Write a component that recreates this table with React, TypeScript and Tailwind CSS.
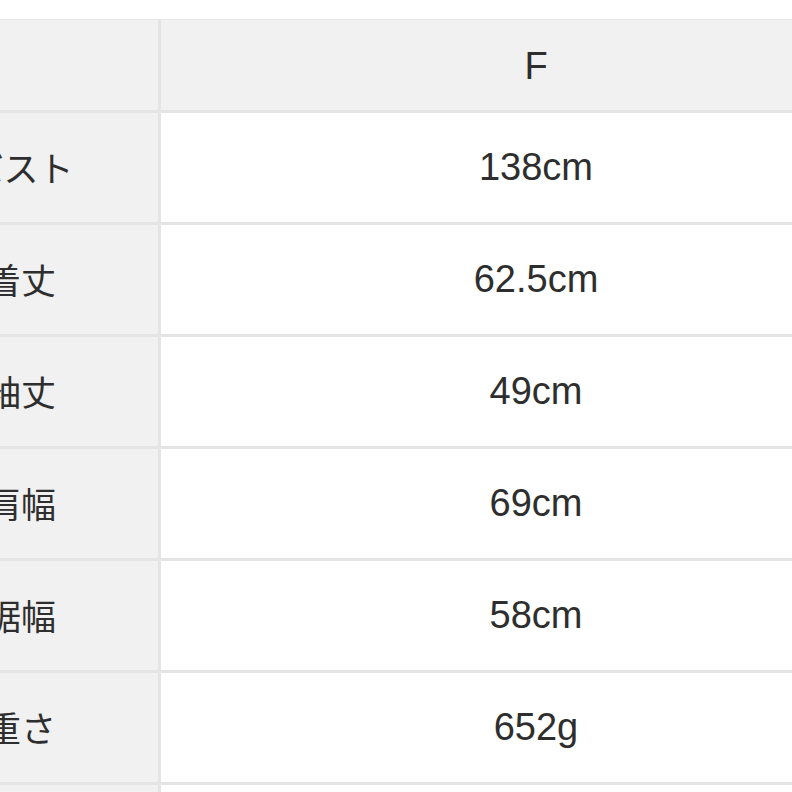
import React from "react";

const rows = [
  ["バスト", "138cm"],
  ["着丈", "62.5cm"],
  ["袖丈", "49cm"],
  ["肩幅", "69cm"],
  ["裾幅", "58cm"],
  ["重さ", "652g"],
  ["", ""],
];

export default function App() {
  return (
    <div className="w-[792px] h-[792px] bg-white overflow-hidden pt-[19px]">
      <div className="-ml-[116px] w-[1100px] border-t border-[#e6e6e6]">
        <div className="flex h-[93px] border-b-[3px] border-[#e4e4e4]">
          <div className="w-[277px] shrink-0 bg-[#f1f1f1] border-r-[3px] border-[#e4e4e4]" />
          <div className="w-[750px] shrink-0 bg-[#f1f1f1] flex items-center justify-center text-[38px] text-[#2e2e2e] font-['Liberation_Sans',sans-serif] pt-[2px]">
            F
          </div>
        </div>
        {rows.map(([label, value], i) => (
          <div key={i} className="flex h-[112px] border-b-[3px] border-[#e4e4e4]">
            <div className="w-[277px] shrink-0 bg-[#f1f1f1] border-r-[3px] border-[#e4e4e4] flex items-center justify-center text-[35px] text-[#2e2e2e] font-['Noto_Sans_CJK_JP',sans-serif]">
              {label}
            </div>
            <div className="w-[750px] shrink-0 bg-white flex items-center justify-center text-[38px] text-[#2e2e2e] font-['Liberation_Sans',sans-serif]">
              {value}
            </div>
          </div>
        ))}
      </div>
    </div>
  );
}
